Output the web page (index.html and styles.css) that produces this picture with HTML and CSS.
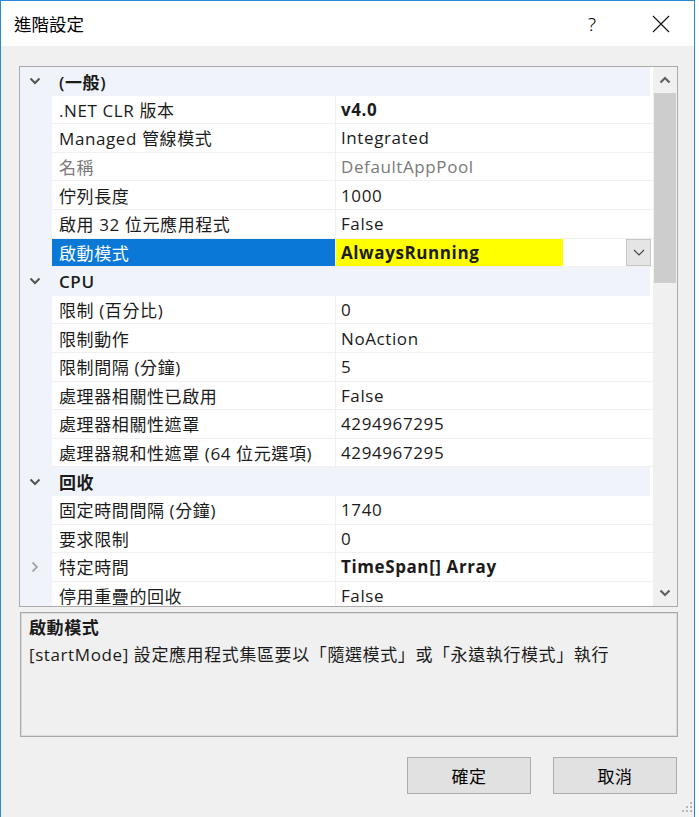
FILE: index.html
```html
<!DOCTYPE html>
<html lang="zh-Hant">
<head>
<meta charset="utf-8">
<title>進階設定</title>
<link rel="stylesheet" href="styles.css">
</head>
<body>
<div class="window">
  <div class="titlebar">
    <div class="title">進階設定</div>
    <div class="help">?</div>
    <div class="close">
      <svg width="18" height="18" viewBox="0 0 18 18"><path d="M1 1 L17 17 M17 1 L1 17" stroke="#111" stroke-width="1.1" fill="none"/></svg>
    </div>
  </div>
  <div class="client">
    <div class="grid">
      <div class="rows">
        <div class="cat"><span class="gut"><svg class="chev" width="12" height="8" viewBox="0 0 12 8"><path d="M1.5 1.5 L6 6 L10.5 1.5" stroke="#555" stroke-width="2" fill="none"/></svg></span><span class="cat-name">(一般)</span></div>
        <div class="row"><span class="gut"></span><span class="name">.NET CLR 版本</span><span class="val bold">v4.0</span></div>
        <div class="row"><span class="gut"></span><span class="name">Managed 管線模式</span><span class="val">Integrated</span></div>
        <div class="row dis"><span class="gut"></span><span class="name">名稱</span><span class="val">DefaultAppPool</span></div>
        <div class="row"><span class="gut"></span><span class="name">佇列長度</span><span class="val">1000</span></div>
        <div class="row"><span class="gut"></span><span class="name">啟用 32 位元應用程式</span><span class="val">False</span></div>
        <div class="row sel"><span class="gut"></span><span class="name">啟動模式</span><span class="val edit"><span class="hl bold">AlwaysRunning</span><span class="dd"><svg width="12" height="7" viewBox="0 0 12 7"><path d="M1 1 L6 6 L11 1" stroke="#444" stroke-width="1.1" fill="none"/></svg></span></span></div>
        <div class="cat"><span class="gut"><svg class="chev" width="12" height="8" viewBox="0 0 12 8"><path d="M1.5 1.5 L6 6 L10.5 1.5" stroke="#555" stroke-width="2" fill="none"/></svg></span><span class="cat-name">CPU</span></div>
        <div class="row"><span class="gut"></span><span class="name">限制 (百分比)</span><span class="val">0</span></div>
        <div class="row"><span class="gut"></span><span class="name">限制動作</span><span class="val">NoAction</span></div>
        <div class="row"><span class="gut"></span><span class="name">限制間隔 (分鐘)</span><span class="val">5</span></div>
        <div class="row"><span class="gut"></span><span class="name">處理器相關性已啟用</span><span class="val">False</span></div>
        <div class="row"><span class="gut"></span><span class="name">處理器相關性遮罩</span><span class="val">4294967295</span></div>
        <div class="row"><span class="gut"></span><span class="name">處理器親和性遮罩 (64 位元選項)</span><span class="val">4294967295</span></div>
        <div class="cat"><span class="gut"><svg class="chev" width="12" height="8" viewBox="0 0 12 8"><path d="M1.5 1.5 L6 6 L10.5 1.5" stroke="#555" stroke-width="2" fill="none"/></svg></span><span class="cat-name">回收</span></div>
        <div class="row"><span class="gut"></span><span class="name">固定時間間隔 (分鐘)</span><span class="val">1740</span></div>
        <div class="row"><span class="gut"></span><span class="name">要求限制</span><span class="val">0</span></div>
        <div class="row"><span class="gut"><svg class="chev" width="8" height="12" viewBox="0 0 8 12"><path d="M1.5 1.5 L6 6 L1.5 10.5" stroke="#a6a6a6" stroke-width="1.8" fill="none"/></svg></span><span class="name">特定時間</span><span class="val bold">TimeSpan[] Array</span></div>
        <div class="row"><span class="gut"></span><span class="name">停用重疊的回收</span><span class="val">False</span></div>
      </div>
      <div class="vscroll">
        <div class="sbtn"><svg width="12" height="8" viewBox="0 0 12 8"><path d="M1.5 6.5 L6 2 L10.5 6.5" stroke="#606060" stroke-width="2.2" fill="none"/></svg></div>
        <div class="track"><div class="thumb"></div></div>
        <div class="sbtn"><svg width="12" height="8" viewBox="0 0 12 8"><path d="M1.5 1.5 L6 6 L10.5 1.5" stroke="#606060" stroke-width="2.2" fill="none"/></svg></div>
      </div>
    </div>
    <div class="desc">
      <div class="desc-title">啟動模式</div>
      <div class="desc-text">[startMode] 設定應用程式集區要以「隨選模式」或「永遠執行模式」執行</div>
    </div>
    <div class="buttons">
      <button class="btn">確定</button>
      <button class="btn">取消</button>
    </div>
    <div class="grip">
      <svg width="12" height="12" viewBox="0 0 12 12" fill="#b8b8b8"><rect x="9" y="1" width="2" height="2"/><rect x="5" y="5" width="2" height="2"/><rect x="9" y="5" width="2" height="2"/><rect x="1" y="9" width="2" height="2"/><rect x="5" y="9" width="2" height="2"/><rect x="9" y="9" width="2" height="2"/></svg>
    </div>
  </div>
</div>
</body>
</html>
```
FILE: styles.css
```css
html, body {
  margin: 0;
  padding: 0;
  background: #ffffff;
}
body {
  font-family: "Open Sans", "Noto Sans CJK TC", sans-serif;
  font-size: 17px;
  letter-spacing: 0.6px;
  color: #1b1b1b;
  width: 699px;
  height: 817px;
  overflow: hidden;
}
.window {
  width: 693px;
  height: 816px;
  border: 1px solid #2b88d8;
  border-bottom: none;
  display: flex;
  flex-direction: column;
  background: #f0f0f0;
}
.titlebar {
  height: 45px;
  background: #ffffff;
  display: flex;
  align-items: center;
  flex-shrink: 0;
}
.title {
  font-family: "Noto Sans CJK TC", sans-serif;
  font-size: 17.5px;
  letter-spacing: 0;
  margin-left: 13px;
  flex: 1;
  color: #000;
}
.help {
  font-family: "Noto Sans", sans-serif;
  font-size: 19px;
  letter-spacing: 0;
  width: 20px;
  text-align: center;
  margin-right: 50px;
  color: #000;
  font-weight: 300;
}
.close {
  width: 18px;
  height: 18px;
  margin-right: 24px;
  display: flex;
}
.client {
  flex: 1;
  padding: 20px 16px 0 18px;
  display: flex;
  flex-direction: column;
  position: relative;
}
.grid {
  height: 539px;
  border: 1px solid #ababab;
  background: #ffffff;
  display: flex;
  flex-shrink: 0;
}
.rows {
  flex: 1;
  overflow: hidden;
  display: flex;
  flex-direction: column;
}
.cat, .row {
  height: 28.6px;
  flex-shrink: 0;
  display: flex;
  align-items: stretch;
  box-sizing: border-box;
}
.cat {
  background: #f0f4fa;
  margin-right: 3px;
}
.gut {
  width: 32px;
  flex-shrink: 0;
  background: #f0f4fa;
  display: flex;
  align-items: center;
  justify-content: center;
  padding-right: 3px;
  box-sizing: border-box;
}
.cat-name {
  display: flex;
  align-items: center;
  padding-left: 7px;
  font-weight: 600;
}
.name {
  width: 284px;
  flex-shrink: 0;
  border-right: 1px solid #f0f0f0;
  border-bottom: 1px solid #f0f0f0;
  padding-left: 7px;
  box-sizing: border-box;
  display: flex;
  align-items: center;
  white-space: nowrap;
  overflow: hidden;
}
.val {
  flex: 1;
  border-bottom: 1px solid #f0f0f0;
  padding-left: 5px;
  display: flex;
  align-items: center;
  white-space: nowrap;
}
.bold { font-weight: 700; }
.dis .name, .dis .val { color: #7a7a7a; }
.sel .name {
  background: #0a78d7;
  color: #ffffff;
}
.val.edit {
  padding-left: 0;
  padding-right: 2px;
  align-items: stretch;
}
.hl {
  background: #ffff00;
  width: 227px;
  padding-left: 5px;
  box-sizing: border-box;
  display: flex;
  align-items: center;
}
.dd {
  margin-left: auto;
  width: 25px;
  background: #e5e5e5;
  border: 1px solid #c6c6c6;
  box-sizing: border-box;
  display: flex;
  align-items: center;
  justify-content: center;
}
.vscroll {
  width: 24px;
  flex-shrink: 0;
  background: #f0f0f0;
  display: flex;
  flex-direction: column;
}
.sbtn {
  height: 26px;
  display: flex;
  align-items: center;
  justify-content: center;
  flex-shrink: 0;
}
.track {
  flex: 1;
  padding: 0 1px;
}
.thumb {
  margin-top: 0;
  height: 190px;
  background: #cdcdcd;
}
.desc {
  margin-top: 5px;
  height: 125px;
  border: 1px solid #a8a8a8;
  box-shadow: inset 0 0 0 1px #dcdcdc;
  padding: 2px 8px;
  box-sizing: border-box;
  margin-left: 1px;
}
.desc-title {
  font-weight: 700;
  line-height: 26px;
}
.desc-text {
  line-height: 28px;
}
.buttons {
  display: flex;
  justify-content: flex-end;
  gap: 22px;
  margin-top: 20px;
  padding-right: 1px;
}
.btn {
  width: 124px;
  height: 37px;
  background: #e1e1e1;
  border: 1px solid #adadad;
  font-family: "Noto Sans CJK TC", sans-serif;
  font-size: 17px;
  letter-spacing: 0.5px;
  color: #000;
  padding: 0;
}
.grip {
  position: absolute;
  right: 1px;
  bottom: 4px;
  display: flex;
}
```
